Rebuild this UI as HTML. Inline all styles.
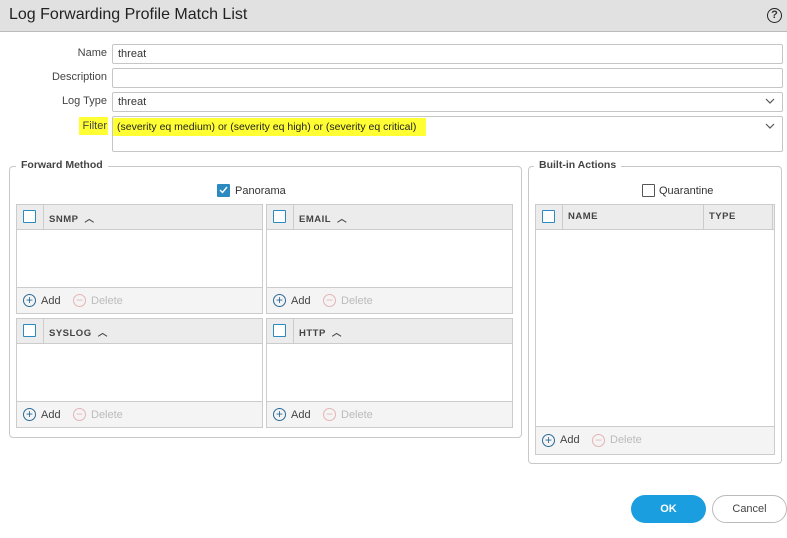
<!DOCTYPE html>
<html><head><style>
*{box-sizing:border-box;margin:0;padding:0}
body{width:787px;height:538px;background:#fff;font-family:"Liberation Sans",sans-serif;font-size:11px;color:#333;position:relative;overflow:hidden}
.a{position:absolute}
.title{left:0;top:0;width:787px;height:32px;background:#e1e1e1;border-bottom:1px solid #bbb}
.title span{position:absolute;left:9px;top:6px;font-size:16px;color:#222}
.lbl{text-align:right;width:100px;left:7px;color:#444}
.inp{left:112px;width:671px;height:20px;border:1px solid #c6c6c6;border-radius:2px;padding:3px 5px;color:#333}
.fs{border:1px solid #c8c8c8;border-radius:4px}
.lg{background:#fff;padding:0 5px;font-weight:bold;color:#444;font-size:10.5px}
.grid{border:1px solid #ccc;background:#fff}
.gh{position:absolute;left:0;right:0;top:0;height:25px;background:#ececec;border-bottom:1px solid #ccc}
.cb{position:absolute;width:13px;height:13px;border:1.5px solid #2b8ac0;background:#fff;border-radius:1px}
.gh .sep{position:absolute;top:0;bottom:0;border-left:1px solid #ccc}
.gh b{position:absolute;top:6px;font-size:9.5px;color:#444;letter-spacing:.5px}
.gf{position:absolute;left:0;right:0;bottom:0;height:26px;background:#f4f4f4;border-top:1px solid #ccc;font-size:11px}
.ic{position:absolute;width:13px;height:13px;border-radius:50%;top:6px;text-align:center;line-height:11px;font-size:12px}
.add{border:1px solid #2a6a97;color:#2a6a97}
.del{border:1px solid #e4b4b4;color:#e4b4b4}
.gf span{top:7px !important}
</style></head><body>
<div class="a title"><span>Log Forwarding Profile Match List</span>
<div class="a" style="left:767px;top:8px;width:15px;height:15px;border:1.5px solid #222;border-radius:50%;font-size:11px;font-weight:bold;text-align:center;line-height:12px">?</div></div>

<div class="a lbl" style="top:47px">Name</div>
<div class="a inp" style="top:44px">threat</div>
<div class="a lbl" style="top:71px">Description</div>
<div class="a inp" style="top:68px"></div>
<div class="a lbl" style="top:95px">Log Type</div>
<div class="a inp" style="top:92px">threat</div>
<svg class="a" style="left:765px;top:98px" width="10" height="7"><path d="M1 1l4 4 4-4" fill="none" stroke="#555" stroke-width="1.2"/></svg>
<div class="a" style="left:79px;top:117px;width:29px;height:18px;background:#ffff33"></div>
<div class="a lbl" style="top:120px">Filter</div>
<div class="a inp" style="top:116px;height:36px"></div>
<div class="a" style="left:113px;top:118px;width:313px;height:18px;background:#ffff33;padding:3px 4px;font-size:10.5px;color:#222">(severity eq medium) or (severity eq high) or (severity eq critical)</div>
<svg class="a" style="left:765px;top:123px" width="10" height="7"><path d="M1 1l4 4 4-4" fill="none" stroke="#555" stroke-width="1.2"/></svg>

<div class="a fs" style="left:9px;top:166px;width:513px;height:272px"></div>
<div class="a lg" style="left:16px;top:159px">Forward Method</div>
<div class="a cb" style="left:217px;top:184px;background:#2b8ac0"><svg width="11" height="10" style="position:absolute;left:0;top:0"><path d="M2 5l2.5 2.5L9 2" fill="none" stroke="#fff" stroke-width="1.4"/></svg></div>
<div class="a" style="left:235px;top:185px">Panorama</div>

<div class="a fs" style="left:528px;top:166px;width:254px;height:298px"></div>
<div class="a lg" style="left:534px;top:159px">Built-in Actions</div>
<div class="a cb" style="left:642px;top:184px;border-color:#555;border-width:1px"></div>
<div class="a" style="left:659px;top:185px">Quarantine</div>

<div class="a grid" style="left:16px;top:204px;width:247px;height:110px"><div class="gh"><div class="cb" style="left:6px;top:5px"></div><div class="sep" style="left:26px"></div><b style="left:32px">SNMP &nbsp;︿</b></div><div class="gf"><div class="ic add" style="left:6px">+</div><span class="a" style="left:24px;color:#444">Add</span><div class="ic del" style="left:56px">−</div><span class="a" style="left:74px;color:#bbb">Delete</span></div></div>
<div class="a grid" style="left:266px;top:204px;width:247px;height:110px"><div class="gh"><div class="cb" style="left:6px;top:5px"></div><div class="sep" style="left:26px"></div><b style="left:32px">EMAIL &nbsp;︿</b></div><div class="gf"><div class="ic add" style="left:6px">+</div><span class="a" style="left:24px;color:#444">Add</span><div class="ic del" style="left:56px">−</div><span class="a" style="left:74px;color:#bbb">Delete</span></div></div>
<div class="a grid" style="left:16px;top:318px;width:247px;height:110px"><div class="gh"><div class="cb" style="left:6px;top:5px"></div><div class="sep" style="left:26px"></div><b style="left:32px">SYSLOG &nbsp;︿</b></div><div class="gf"><div class="ic add" style="left:6px">+</div><span class="a" style="left:24px;color:#444">Add</span><div class="ic del" style="left:56px">−</div><span class="a" style="left:74px;color:#bbb">Delete</span></div></div>
<div class="a grid" style="left:266px;top:318px;width:247px;height:110px"><div class="gh"><div class="cb" style="left:6px;top:5px"></div><div class="sep" style="left:26px"></div><b style="left:32px">HTTP &nbsp;︿</b></div><div class="gf"><div class="ic add" style="left:6px">+</div><span class="a" style="left:24px;color:#444">Add</span><div class="ic del" style="left:56px">−</div><span class="a" style="left:74px;color:#bbb">Delete</span></div></div>
<div class="a grid" style="left:535px;top:204px;width:240px;height:251px"><div class="gh"><div class="cb" style="left:6px;top:5px"></div><div class="sep" style="left:26px"></div><b style="left:32px">NAME</b><div class="sep" style="left:167px"></div><b style="left:173px">TYPE</b><div class="sep" style="left:236px"></div></div><div class="gf" style="height:28px"><div class="ic add" style="left:6px;top:7px">+</div><span class="a" style="left:24px;color:#444">Add</span><div class="ic del" style="left:56px;top:7px">−</div><span class="a" style="left:74px;color:#bbb">Delete</span></div></div>

<div class="a" style="left:631px;top:495px;width:75px;height:28px;background:#1a9ee0;border-radius:14px;color:#fff;font-weight:bold;text-align:center;line-height:28px">OK</div>
<div class="a" style="left:712px;top:495px;width:75px;height:28px;border:1px solid #bbb;border-radius:14px;color:#444;text-align:center;line-height:26px">Cancel</div>
</body></html>
